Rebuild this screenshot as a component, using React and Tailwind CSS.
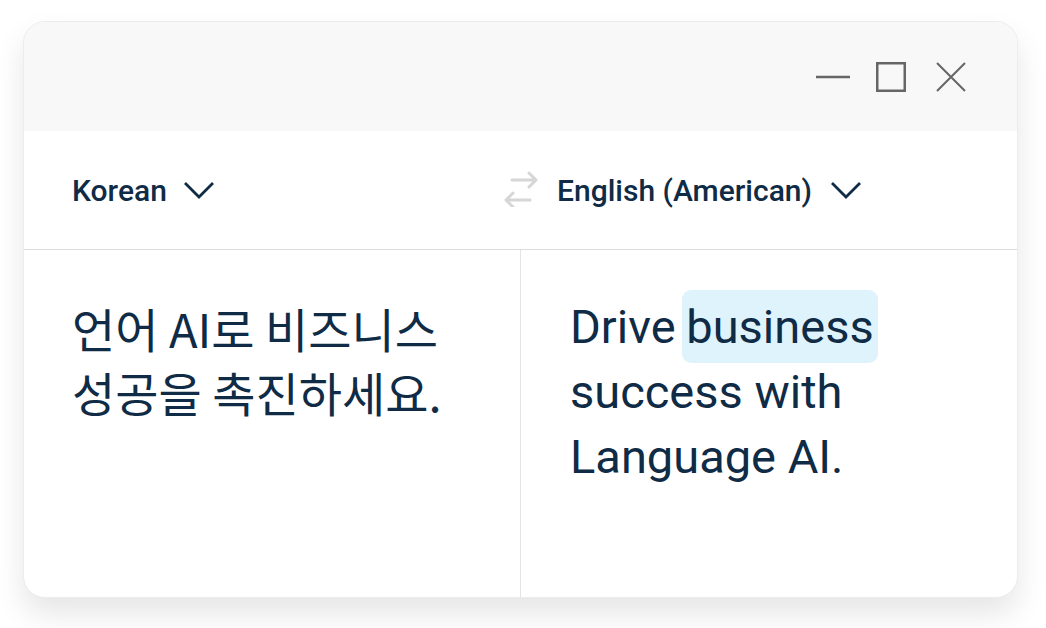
export default function App() {
  return (
    <div className="min-h-screen bg-white pl-[23px] pt-[21px]">
      <div className="flex h-[577px] w-[995px] flex-col overflow-hidden rounded-[22px] border border-[#ececec] bg-white shadow-[0_16px_30px_rgba(0,0,0,0.1)] text-[#0f2b46]">
        <div className="flex h-[109px] shrink-0 items-center justify-end bg-[#f8f8f8] pr-[51px]">
          <svg width="34" height="30" viewBox="0 0 34 30">
            <line x1="0" y1="15" x2="34" y2="15" stroke="#666" strokeWidth="2.5" />
          </svg>
          <svg width="30" height="30" viewBox="0 0 30 30" className="ml-[26px]">
            <rect x="1.25" y="1.25" width="27.5" height="27.5" fill="none" stroke="#666" strokeWidth="2.5" />
          </svg>
          <svg width="30" height="30" viewBox="0 0 30 30" className="ml-[30px]">
            <path d="M1 1 L29 29 M29 1 L1 29" stroke="#666" strokeWidth="2" fill="none" />
          </svg>
        </div>

        <div className="flex h-[119px] shrink-0 items-center border-b border-[#dcdcdc] pl-[48px] font-['Roboto',sans-serif] text-[30px] font-medium">
          <div className="flex w-[431px] items-center gap-[16px]">
            <span>Korean</span>
            <Chevron />
          </div>
          <svg width="36" height="36" viewBox="0 0 36 36" className="-mt-[2px]">
            <path d="M9 9 H33 M26 2 L33 9 L26 16" stroke="#d6d6d6" strokeWidth="3" fill="none" strokeLinecap="round" strokeLinejoin="round" />
            <path d="M27 29 H3 M10 22 L3 29 L10 36" stroke="#d6d6d6" strokeWidth="3" fill="none" strokeLinecap="round" strokeLinejoin="round" />
          </svg>
          <div className="ml-[18px] flex items-center gap-[18px]">
            <span>English (American)</span>
            <Chevron />
          </div>
        </div>

        <div className="grid flex-1 grid-cols-[496px_1fr]">
          <div className="pl-[48px] pt-[46px] font-['Noto_Sans_CJK_KR','Noto_Sans',sans-serif] text-[47px] leading-[64px]">
            언어 AI로 비즈니스
            <br />
            성공을 촉진하세요.
          </div>
          <div className="border-l border-[#e4e4e4] pl-[49px] pt-[44px] font-['Roboto',sans-serif] text-[47px] leading-[65px]">
            Drive{" "}
            <span className="-ml-[5px] rounded-[9px] bg-[#dff3fd] px-[4px] py-[9px]">business</span>
            <br />
            success with
            <br />
            Language AI.
          </div>
        </div>
      </div>
    </div>
  );
}

function Chevron() {
  return (
    <svg width="32" height="18" viewBox="0 0 32 18">
      <path d="M2 2 L16 16 L30 2" stroke="#0f2b46" strokeWidth="2.8" fill="none" />
    </svg>
  );
}
